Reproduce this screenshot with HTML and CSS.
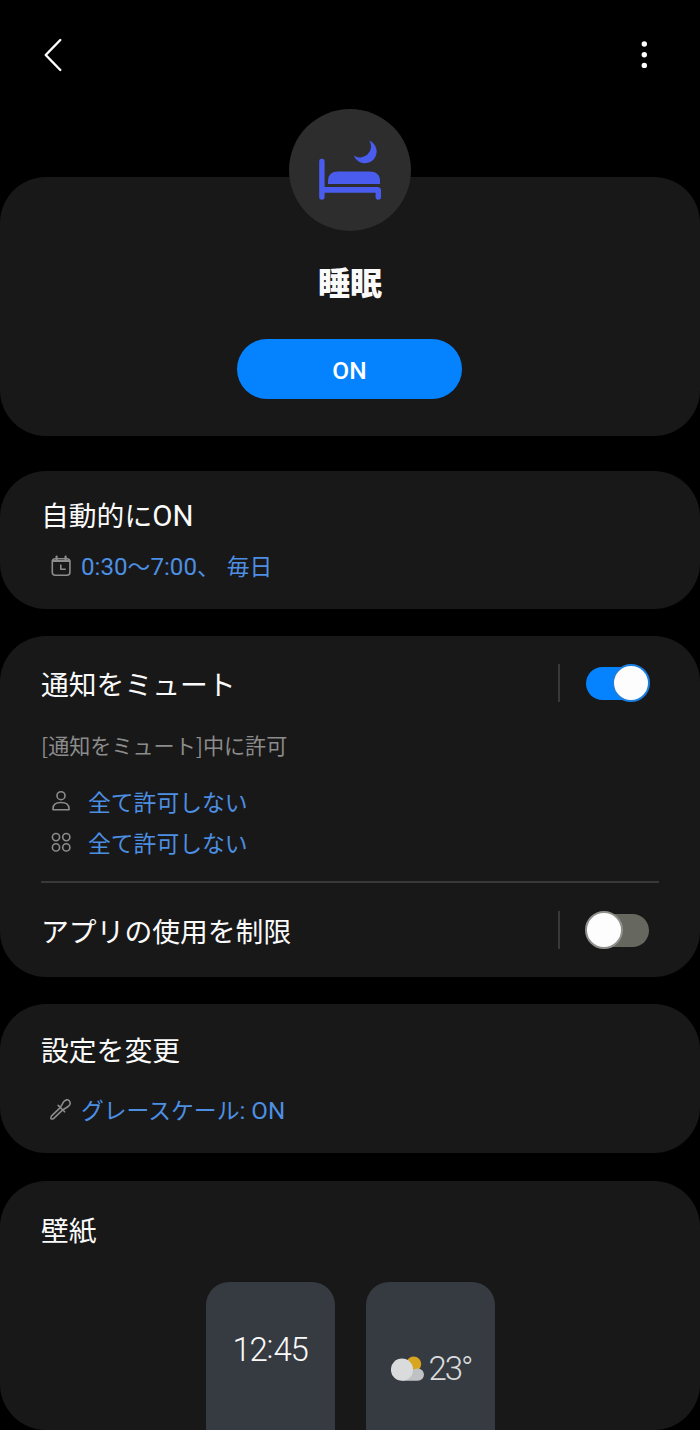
FILE: index.html
```html
<!DOCTYPE html>
<html lang="ja">
<head>
    <meta charset="UTF-8">
    <meta name="viewport" content="width=device-width, initial-scale=1.0">
    <title>睡眠</title>
    <link rel="stylesheet" href="styles.css">
</head>
<body>
    <header class="top-bar">
        <svg class="back-icon" width="24" height="36" viewBox="0 0 24 36"><path d="M19.3 3 L4.7 18 L19.3 33"/></svg>
        <svg class="more-icon" width="10" height="32" viewBox="0 0 10 32">
            <circle cx="5.3" cy="5" r="2.7"/>
            <circle cx="5.3" cy="15.7" r="2.7"/>
            <circle cx="5.3" cy="26.4" r="2.7"/>
        </svg>
    </header>

    <section class="card hero">
        <div class="mode-icon">
            <svg width="122" height="122" viewBox="0 0 122 122">
                <path d="M30.2 52.5a2.7 2.7 0 0 1 5.4 0V78H88.5a3.5 3.5 0 0 1 3.5 3.5V88a2.7 2.7 0 0 1-5.4 0V83.7H35.6V88a2.7 2.7 0 0 1-5.4 0Z"/>
                <path d="M39 75V72Q39 62.5 49 62.5H80Q91 62.5 91 72V75Z"/>
                <path d="M80.3 31.5A11.8 11.8 0 1 1 64.8 46.5A11 11 0 0 0 80.3 31.5Z"/>
            </svg>
        </div>
        <h1>睡眠</h1>
        <button class="on-button">ON</button>
    </section>

    <section class="card auto">
        <h2>自動的に<span class="en">ON</span></h2>
        <div class="detail">
            <svg class="icon" width="22" height="24" viewBox="0 0 22 24">
                <rect x="2.3" y="3.8" width="17.6" height="16.4" rx="3"/>
                <path d="M2.8 6H19.4M6.6 1.5V4.5M15.6 1.5V4.5" stroke-width="2.2"/>
                <path d="M10.8 10V14.3H15.2"/>
            </svg>
            <span><span class="en">0:30</span>～<span class="en">7:00</span>、<span class="day">毎日</span></span>
        </div>
    </section>

    <section class="card mute">
        <div class="row">
            <h2>通知をミュート</h2>
            <div class="switch on"><span class="knob"></span></div>
        </div>
        <p class="note">[通知をミュート]中に許可</p>
        <div class="detail wide">
            <svg class="icon" width="22" height="24" viewBox="0 0 22 24">
                <circle cx="11" cy="5.7" r="4"/>
                <path d="M3 19.7V18.7Q3 12.5 11 12.5Q19 12.5 19 18.7V19.7Z"/>
            </svg>
            <span>全て許可しない</span>
        </div>
        <div class="detail wide">
            <svg class="icon" width="22" height="24" viewBox="0 0 22 24">
                <circle cx="6" cy="6.1" r="3.6"/>
                <circle cx="16.3" cy="6.1" r="3.6"/>
                <circle cx="6" cy="16.4" r="3.6"/>
                <circle cx="16.3" cy="16.4" r="3.6"/>
            </svg>
            <span>全て許可しない</span>
        </div>
        <div class="row limit">
            <h2>アプリの使用を制限</h2>
            <div class="switch"><span class="knob"></span></div>
        </div>
    </section>

    <section class="card change">
        <h2>設定を変更</h2>
        <div class="detail">
            <svg class="icon" width="22" height="24" viewBox="0 0 22 24">
                <path d="M8.2 6.4L14.6 12.8M10 8.8L1.6 16.9Q-0.8 21.4 3.8 19.4L12.4 11.2M10.4 8.4L13.6 2.8Q16.8-0.6 19.2 1.8Q21.6 4.4 18.2 7.5L12.6 11"/>
            </svg>
            <span>グレースケール<span class="en">: ON</span></span>
        </div>
    </section>

    <section class="card wallpaper">
        <h2>壁紙</h2>
        <div class="previews">
            <div class="preview lock">12<span class="colon">:</span>45</div>
            <div class="preview home">
                <svg width="34" height="26" viewBox="0 0 34 26">
                    <circle cx="22.7" cy="8" r="7.5" fill="#d8a520"/>
                    <path d="M11 24.8V14H21Q24 12.4 26.8 12.4A6.2 6.2 0 0 1 26.8 24.8Z" fill="#bfc2c4"/>
                    <circle cx="11" cy="13.7" r="11.1" fill="#d9dbdc"/>
                </svg>
                <span>23°</span>
            </div>
        </div>
    </section>
</body>
</html>
```
FILE: styles.css
```css
* {
    box-sizing: border-box;
}

body {
    margin: 0;
    height: 1430px;
    overflow: hidden;
    background-color: #000;
    color: #fafafa;
    font-family: "Noto Sans CJK JP", sans-serif;
}

h1, h2, p {
    margin: 0;
}

.top-bar {
    display: flex;
    justify-content: space-between;
    height: 177px;
    padding: 37px 51px 0 41px;
}

.back-icon {
    fill: none;
    stroke: #fff;
    stroke-width: 2.4;
    stroke-linecap: round;
    stroke-linejoin: round;
}

.more-icon {
    margin-top: 2px;
    fill: #fff;
}

.card {
    background-color: #181818;
    border-radius: 46px;
    padding: 0 41px;
}

.hero {
    display: flex;
    flex-direction: column;
    align-items: center;
    height: 259px;
    margin-bottom: 35px;
}

.mode-icon {
    width: 122px;
    height: 122px;
    margin-top: -68px;
    border-radius: 50%;
    background-color: #2d2d2d;
}

.mode-icon svg {
    display: block;
    fill: #4a5ced;
}

h1 {
    margin-top: 30px;
    font-size: 32px;
    font-weight: 900;
    line-height: 40px;
}

.on-button {
    width: 225px;
    height: 60px;
    margin: 38px 1px 0 0;
    padding: 2px 0 0;
    border: none;
    border-radius: 30px;
    background-color: #0583ff;
    color: #fff;
    font-family: Roboto, sans-serif;
    font-size: 24.5px;
    font-weight: 500;
}

h2 {
    font-size: 27.8px;
    font-weight: normal;
    line-height: 40px;
    white-space: nowrap;
}

.en {
    font-family: Roboto, sans-serif;
    font-size: 1.06em;
}

.detail {
    display: flex;
    align-items: center;
    gap: 9px;
    height: 41px;
    padding-left: 9px;
    color: #4d8fe3;
    font-size: 22.8px;
    line-height: 40px;
    white-space: nowrap;
}

.detail.wide {
    gap: 16px;
}

.icon {
    fill: none;
    stroke: #8c8c8c;
    stroke-width: 1.6;
    stroke-linecap: round;
    stroke-linejoin: round;
    overflow: visible;
}

.day {
    margin-left: 7px;
}

.auto {
    height: 138px;
    margin-bottom: 27px;
    padding-top: 23px;
}

.auto .detail {
    margin-top: 10px;
}

.mute {
    height: 341px;
    margin-bottom: 27px;
    padding-top: 27px;
}

.row {
    display: flex;
    justify-content: space-between;
    align-items: center;
    height: 40px;
}

.switch {
    display: flex;
    align-items: center;
    width: 92px;
    height: 38px;
    margin-right: 9px;
    padding-left: 26px;
    border-left: 2px solid #383838;
}

.switch::before {
    content: "";
    flex-shrink: 0;
    width: 63px;
    height: 33px;
    border-radius: 17px;
    background-color: #666860;
}

.knob {
    flex-shrink: 0;
    width: 38px;
    height: 38px;
    margin-left: -64px;
    border: 2px solid #8f8f8c;
    border-radius: 50%;
    background-color: #fdfdfd;
}

.switch.on::before {
    background-color: #0583ff;
}

.switch.on .knob {
    margin-left: -37px;
    border-color: #1a7fe0;
}

.note {
    margin: 22px 0 16px;
    color: #8c8c8c;
    font-size: 21.1px;
    line-height: 40px;
}

.row.limit {
    height: 96px;
    margin-top: 18px;
    border-top: 2px solid #383838;
}

.change {
    height: 149px;
    margin-bottom: 28px;
    padding-top: 25px;
}

.change .detail {
    margin-top: 21px;
}

.wallpaper {
    height: 249px;
    padding-top: 28px;
}

.previews {
    display: flex;
    justify-content: center;
    gap: 31px;
    margin-top: 33px;
}

.preview {
    width: 129px;
    height: 148px;
    border-radius: 23px 23px 0 0;
    background-color: #363a41;
    font-family: Roboto, sans-serif;
    font-weight: 300;
}

.lock {
    padding-top: 48px;
    font-size: 33px;
    line-height: 40px;
    letter-spacing: -1.3px;
    text-align: center;
}

.colon {
    position: relative;
    top: -3px;
    letter-spacing: 0;
}

.home {
    display: flex;
    gap: 4px;
    padding: 67px 0 0 25px;
    color: #d9dbdc;
    font-size: 33px;
    line-height: 40px;
    letter-spacing: -2px;
}

.home svg {
    margin-top: 7px;
}
```
